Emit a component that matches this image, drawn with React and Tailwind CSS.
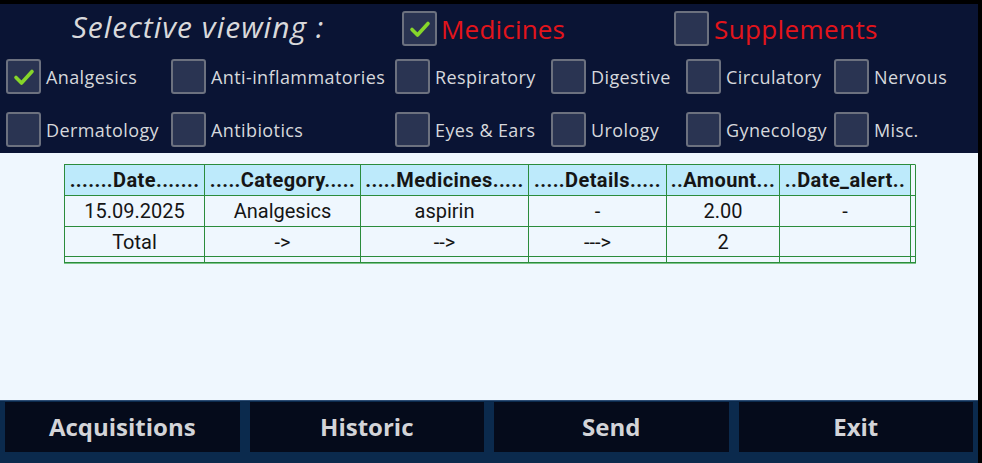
import React from "react";

const Check = () => (
  <svg viewBox="0 0 24 24" className="w-[24px] h-[24px]">
    <path d="M4 12.5 L9.5 18 L20 6.5" fill="none" stroke="#86d62a" strokeWidth="3.6" strokeLinecap="round" strokeLinejoin="round" />
  </svg>
);

const Box = ({ checked }) => (
  <div className="w-[35px] h-[35px] shrink-0 rounded-[3px] border-2 border-[#6c717f] bg-[#2a3452] flex items-center justify-center">
    {checked && <Check />}
  </div>
);

const Cat = ({ label, checked }) => (
  <div className="flex items-center gap-[5px] h-[35px]">
    <Box checked={checked} />
    <span className="text-[#d6d8dc] text-[18px] leading-none tracking-[0.4px] whitespace-nowrap">{label}</span>
  </div>
);

const row1 = [["Analgesics", true], ["Anti-inflammatories"], ["Respiratory"], ["Digestive"], ["Circulatory"], ["Nervous"]];
const row2 = [["Dermatology"], ["Antibiotics"], ["Eyes & Ears"], ["Urology"], ["Gynecology"], ["Misc."]];

const cols = "grid-cols-[140px_156px_168px_138px_113px_131px_5px]";

const Cell = ({ children, head }) => (
  <div
    className={
      "h-full flex items-center justify-center border-r border-b border-[#2b8c3c] text-[20px] text-[#151515] whitespace-nowrap overflow-hidden " +
      (head ? "bg-[#bdeafb] font-bold tracking-[0.4px]" : "")
    }
  >
    {children}
  </div>
);

export default function App() {
  const ff = { fontFamily: '"Open Sans", "DejaVu Sans", sans-serif' };
  const header = [".......Date.......", ".....Category.....", ".....Medicines.....", ".....Details.....", "..Amount...", "..Date_alert.."];
  const r1 = ["15.09.2025", "Analgesics", "aspirin", "-", "2.00", "-"];
  const r2 = ["Total", "->", "-->", "--->", "2", ""];
  return (
    <div className="w-[982px] h-[463px] bg-black pt-[4px]" style={ff}>
      <div className="w-[978px] h-[459px] flex flex-col">
        {/* header */}
        <div className="h-[149px] shrink-0 bg-[#0a1434] flex flex-col overflow-hidden">
          <div className="h-[49px] shrink-0 flex items-center">
            <div className="w-[402px] flex justify-center pr-[6px] pb-[4px]">
              <span className="italic text-[30px] leading-none tracking-[1px] text-[#d9d9db] font-medium">Selective viewing :</span>
            </div>
            <div className="w-[272px] flex items-center gap-[4px]">
              <Box checked />
              <span className="text-[26px] leading-none tracking-[0.2px] text-[#e3141b]">Medicines</span>
            </div>
            <div className="flex items-center gap-[5px]">
              <Box />
              <span className="text-[26px] leading-none tracking-[0.4px] text-[#e3141b]">Supplements</span>
            </div>
          </div>
          <div className="pl-[6px] pt-[6px] grid grid-cols-[165px_224px_156px_135px_148px_1fr] grid-rows-[35px_35px] gap-y-[18px]">
            {[...row1, ...row2].map(([l, c]) => (
              <Cat key={l} label={l} checked={c} />
            ))}
          </div>
        </div>
        {/* content */}
        <div className="h-[247px] shrink-0 bg-[#eff7fe] pt-[11px] pl-[64px]" style={{ fontFamily: "Roboto, sans-serif" }}>
          <div className="w-[852px] border border-[#7cc58a]">
            <div className={"grid " + cols + " grid-rows-[31px_31px_30px_6px] border-l border-t border-[#2b8c3c] -ml-px -mt-px"}>
              {header.map((h) => (
                <Cell key={h} head>{h}</Cell>
              ))}
              <Cell />
              {r1.map((h, i) => (
                <Cell key={i}>{h}</Cell>
              ))}
              <Cell />
              {r2.map((h, i) => (
                <Cell key={i}>{h}</Cell>
              ))}
              <Cell />
              {[0, 1, 2, 3, 4, 5, 6].map((i) => (
                <Cell key={i} />
              ))}
            </div>
          </div>
        </div>
        {/* bottom */}
        <div className="flex-1 bg-[#0b2a4d] border-t border-[#2d4d74] pt-[1px] px-[5px] pb-[11px] flex gap-[10px]">
          {["Acquisitions", "Historic", "Send", "Exit"].map((b) => (
            <div key={b} className="flex-1 bg-[#050b1b] flex items-center justify-center text-[24px] font-bold text-[#d3d4d8]">
              {b}
            </div>
          ))}
        </div>
      </div>
    </div>
  );
}
